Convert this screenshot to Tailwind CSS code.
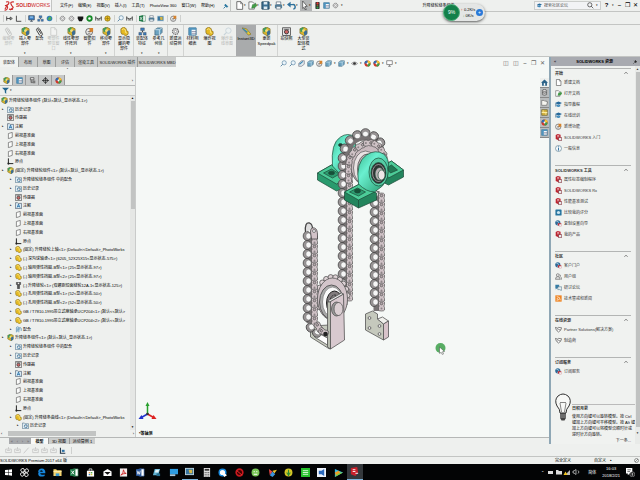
<!DOCTYPE html>
<html lang="zh-CN">
<head>
<meta charset="utf-8">
<title>SOLIDWORKS Premium 2017</title>
<script src="https://cdn.jsdelivr.net/npm/@tailwindcss/browser@4"></script>
</head>
<body class="h-screen overflow-hidden bg-[#eef0ee] font-['Liberation_Sans','Noto_Sans_CJK_SC',sans-serif] text-[4px] leading-[5px] text-black">
<svg class="hidden" aria-hidden="true">
  <symbol id="asm" viewBox="0 0 10 10"><path d="M1 2 5 0l4 2v5L6 10 1 7z" fill="#d9b52c" stroke="#6b5a18" stroke-width=".6"/><path d="M1 2 5 0v4L2 6z" fill="#3c9a63"/><path d="M5 4h4v4L6 10z" fill="#3c6d94"/><circle cx="5" cy="4" r="1.6" fill="#f5e17a"/></symbol>
  <symbol id="part" viewBox="0 0 10 10"><path d="M1 2 4 0l3 2v2l2 1v3L6 10 4 8H2L1 6z" fill="#e5b922" stroke="#7a6216" stroke-width=".7"/><path d="M2 3 4 2l2 1v3L8 7" fill="none" stroke="#fbe88b"/></symbol>
  <symbol id="hist" viewBox="0 0 10 10"><path d="M.6 1.5h3l1 1h4.8v7H.6z" fill="#e4eef4" stroke="#56758a" stroke-width=".9"/><circle cx="5.5" cy="6" r="2.2" fill="#fff" stroke="#2d6c95"/><path d="M5.5 4.8V6h1.3" fill="none" stroke="#234" stroke-width=".7"/></symbol>
  <symbol id="sensor" viewBox="0 0 10 10"><path d="M.6.8h8.8v8.6H.6z" fill="#eee" stroke="#555"/><circle cx="5" cy="5.4" r="2.3" fill="#c66" stroke="#333"/><path d="M2 2.5h6" stroke="#555"/></symbol>
  <symbol id="note" viewBox="0 0 10 10"><path d="M.6 1h3l1 1h4.8v7.4H.6z" fill="#d9eaf5" stroke="#456" stroke-width=".9"/><path d="m3 8 2-5 2 5M3.8 6.3h2.4" fill="none" stroke="#1c6ba5" stroke-width="1.1"/></symbol>
  <symbol id="plane" viewBox="0 0 10 10"><path d="M2 2.2 7.5.6v7L2 9.5z" fill="#fbfcfb" stroke="#555" stroke-width=".9"/></symbol>
  <symbol id="origin" viewBox="0 0 10 10"><path d="M2 .5V8h7" fill="none" stroke="#222" stroke-width="1.4"/><circle cx="2" cy="8" r="1.5" fill="#222"/></symbol>
  <symbol id="mate" viewBox="0 0 10 10"><path d="M2 9V3a1.8 1.8 0 0 1 3.6 0v3M5.5 9V4a1.7 1.7 0 0 1 3.4 0v3M3.8 8V3.2" fill="none" stroke="#4788b5" stroke-width="1"/></symbol>
  <symbol id="bolt" viewBox="0 0 10 10"><path d="M2 .5h6v3L6.5 5v4.5h-3V5L2 3.5z" fill="#555" stroke="#222" stroke-width=".6"/><path d="M4 1h2v2H4z" fill="#eee"/></symbol>
  <symbol id="grid" viewBox="0 0 10 10"><path d="M1 1h8v8H1z" fill="#f4f9fb" stroke="#2f6a8e"/><path d="M1 1h8v2H1zM1 3h3v6H1z" fill="#4e93bd"/><path d="M4 5h5M4 7h5" stroke="#557" stroke-width=".6"/></symbol>
  <symbol id="cfg" viewBox="0 0 10 10"><path d="M2 1h5v3H2zM3 4v4h4M3 6h4" fill="#eee" stroke="#444"/><path d="M6 5h3v4H6z" fill="#777"/></symbol>
  <symbol id="target" viewBox="0 0 10 10"><circle cx="5" cy="5" r="3" fill="none" stroke="#222"/><path d="M5 0v10M0 5h10" stroke="#222"/></symbol>
  <symbol id="ball" viewBox="0 0 10 10"><circle cx="5" cy="5" r="4.4" fill="#d33527"/><path d="M5 5V.6A4.4 4.4 0 0 1 9.4 5z" fill="#f2c72f"/><path d="M5 5h4.4A4.4 4.4 0 0 1 5 9.4z" fill="#3ba04c"/><path d="M5 5H.6A4.4 4.4 0 0 1 5 .6z" fill="#2c6eb5"/><circle cx="5" cy="5" r="1.3" fill="#fff"/></symbol>
  <symbol id="clip" viewBox="0 0 10 10"><path d="m3 2 4 6M2 4l3 5a1.6 1.6 0 0 0 3-2L5 2a1.7 1.7 0 0 0-3 2" fill="none" stroke="#444" stroke-width="1.1"/></symbol>
  <symbol id="doc" viewBox="0 0 10 10"><path d="M2 .7h4.5L8.5 3v6.3H2z" fill="#fff" stroke="#555" stroke-width=".9"/><path d="M6.3.8V3h2" fill="none" stroke="#555" stroke-width=".7"/></symbol>
  <symbol id="open" viewBox="0 0 10 10"><path d="M1 1h4l2 2v6H1z" fill="#fff" stroke="#555" stroke-width=".8"/><path d="m4 8 1-4h3V2l2 3-2 2-3 1z" fill="#43a047" stroke="#23692a" stroke-width=".4"/></symbol>
  <symbol id="save" viewBox="0 0 10 10"><path d="M1 1h8v8H1z" fill="#3b6f91" stroke="#1e445c"/><path d="M3 1h4v3H3zM3 6h4v3H3z" fill="#dce9f1"/></symbol>
  <symbol id="print" viewBox="0 0 10 10"><path d="M2.5 1h5v3h-5z" fill="#fff" stroke="#456" stroke-width=".7"/><path d="M1 4h8v4H1z" fill="#52809c"/><path d="M2.5 6h5v3h-5z" fill="#e9f1f5" stroke="#456" stroke-width=".6"/></symbol>
  <symbol id="undo" viewBox="0 0 10 10"><path d="M2 4h4a2.5 2.5 0 0 1 1 5" fill="none" stroke="#2f719c" stroke-width="1.6"/><path d="M0 4 4 .8v6.4z" fill="#2f719c"/></symbol>
  <symbol id="cur" viewBox="0 0 10 10"><path d="m3 0 5 6H5.5L7 9.5H5.5L4.5 7 3 8.4z" fill="#fff" stroke="#333" stroke-width=".7"/></symbol>
  <symbol id="light" viewBox="0 0 10 10"><rect x="2" y="0" width="6" height="10" rx="1" fill="#333"/><circle cx="5" cy="2" r="1.5" fill="#e33"/><circle cx="5" cy="5" r="1.2" fill="#8a6a22"/><circle cx="5" cy="8" r="1.5" fill="#2b9e47"/></symbol>
  <symbol id="gear" viewBox="0 0 10 10"><circle cx="5" cy="5" r="3.3" fill="#ddd" stroke="#777" stroke-width="1.4" stroke-dasharray="1.5 .6"/><circle cx="5" cy="5" r="1.3" fill="#fff" stroke="#777" stroke-width=".6"/></symbol>
  <symbol id="house" viewBox="0 0 10 10"><path d="M0 5.5 5 .7l5 4.8H8.5v4h-7v-4z" fill="#2c6388"/><path d="M4 6h2v3.5H4z" fill="#fff"/></symbol>
  <symbol id="folder" viewBox="0 0 10 10"><path d="M1 2h3l1 1h3v1h1.5L8 9H1z" fill="#f5f5f0" stroke="#666" stroke-width=".9"/></symbol>
  <symbol id="box" viewBox="0 0 10 10"><path d="M1 1h8v8H1z" fill="#d8b542" stroke="#6e642e"/><path d="M1 5h8M3 2v2M7 6v2" stroke="#fff3ad" stroke-width="1.3"/></symbol>
  <symbol id="cyl" viewBox="0 0 10 10"><path d="M2 2v6q3 2 6 0V2" fill="#ccc" stroke="#555"/><ellipse cx="5" cy="2" rx="3" ry="1.3" fill="#eee" stroke="#555"/><path d="M2 5q3 2 6 0" fill="none" stroke="#555"/></symbol>
  <symbol id="cap" viewBox="0 0 10 10"><path d="M0 3 5 .8 10 3 5 5.5z" fill="#26699b"/><path d="M2 4.5v3q3 2 5.5 0v-3L5 6z" fill="#3c88bb"/><path d="M1 3.5V8" stroke="#1b4a6d" stroke-width=".8"/></symbol>
  <symbol id="new" viewBox="0 0 10 10"><circle cx="4.6" cy="5.4" r="3.8" fill="#eee" stroke="#555" stroke-width=".9"/><path d="M5 1h4v4L5 6z" fill="#d5822c"/><path d="M3 5h3M3 7h3" stroke="#555" stroke-width=".7"/></symbol>
  <symbol id="sw" viewBox="0 0 10 10"><path d="M1 1.5 4 0l4 1v6L5 9 1 7z" fill="#bd2531"/><path d="M3 2.3h3M3 4h3" stroke="#fff" stroke-width=".8"/><path d="M5 5h4.5v4.5H5z" fill="#e9e9e9" stroke="#7d2330" stroke-width=".9"/></symbol>
  <symbol id="info" viewBox="0 0 10 10"><circle cx="5" cy="5" r="4.3" fill="#f4f8fa" stroke="#5a7d91" stroke-width=".9"/><path d="M5 4v4M5 2v1.2" stroke="#23689a" stroke-width="1.3"/></symbol>
  <symbol id="score" viewBox="0 0 10 10"><rect x=".6" y=".6" width="8.8" height="8.8" rx="1" fill="#26749f"/><circle cx="5" cy="5" r="2.3" fill="#cbe5f0"/></symbol>
  <symbol id="globe" viewBox="0 0 10 10"><circle cx="4" cy="4" r="3.7" fill="#2e6a97"/><path d="M2 2q3-1 3 2T3 7" fill="none" stroke="#bfe0ef"/><path d="M4 4.5h5V9H6L4 7z" fill="#c22c36"/><path d="M6 6h3v3H6z" fill="#eee"/></symbol>
  <symbol id="users" viewBox="0 0 10 10"><circle cx="4" cy="3" r="2" fill="#eee" stroke="#555" stroke-width=".8"/><path d="M.7 9q0-4 3.3-4t3.3 4z" fill="#ddd" stroke="#555" stroke-width=".8"/><path d="M6.5 2q2 .5 1 3 2 1 1.8 4H8" fill="none" stroke="#555" stroke-width=".8"/></symbol>
  <symbol id="chat" viewBox="0 0 10 10"><path d="M.5 1H6v5H3L1 8V6H.5z" fill="#347ca5"/><path d="M4 4h5.5v4H9v1.5L7 8H4z" fill="#e7eff3" stroke="#3a6279" stroke-width=".7"/></symbol>
  <symbol id="rss" viewBox="0 0 10 10"><path d="M.5.5h9v9h-9z" fill="#ef8320"/><path d="M2.5 2.3q5 0 5 5.2M2.5 5q2.5 0 2.5 2.5" fill="none" stroke="#fff"/><circle cx="3" cy="7.3" r=".8" fill="#fff"/></symbol>
  <symbol id="hands" viewBox="0 0 10 10"><path d="m.6 2 3 1L5 2l4.400.5L8 6 5 8.600 2 6z" fill="#fff" stroke="#444" stroke-width=".9"/><path d="m3.500 3 2 2L8 6M3 6l2-1" fill="none" stroke="#444" stroke-width=".8"/></symbol>
  <symbol id="lens" viewBox="0 0 10 10"><circle cx="6" cy="4" r="3" fill="#eaf4fa" stroke="#5581a0" stroke-width=".9"/><path d="M4 6 1 9" stroke="#5581a0" stroke-width="1.3"/></symbol>
  <symbol id="sect" viewBox="0 0 10 10"><path d="M1 5 5 1h4v5L5 9H1z" fill="#dfe8ec" stroke="#667" stroke-width=".8"/><path d="M2 6 7 2" stroke="#3b87b4" stroke-width="1.6"/></symbol>
  <symbol id="inst" viewBox="0 0 10 10"><path d="m0 1 5 1 5 6-3 1z" fill="#e8c832" stroke="#75661c" stroke-width=".6"/><path d="m1 2 5 4" stroke="#3b87b4" stroke-width="1.6"/></symbol>
  <symbol id="cube" viewBox="0 0 10 10"><path d="M1 3 4 1h5v5L6 9H1z" fill="#6ca3c1" stroke="#355b72" stroke-width=".7"/><path d="M1 3h5v6M6 3l3-2" fill="none" stroke="#e0f0f7" stroke-width=".8"/></symbol>
  <symbol id="eye" viewBox="0 0 10 10"><path d="M.5 5Q5 .5 9.5 5 5 9.5.5 5z" fill="#ddd" stroke="#666" stroke-width=".7"/><circle cx="5" cy="5" r="1.9" fill="#333"/></symbol>
  <symbol id="mon" viewBox="0 0 10 10"><path d="M1 1h8v5.5H1z" fill="#fff" stroke="#666"/><path d="M5 7v2M3 9h4" stroke="#666"/></symbol>
  <symbol id="bluem" viewBox="0 0 10 10"><path d="M1 1h8v6H1z" fill="#4285cc" stroke="#345"/><path d="M3 9h4M5 7v2" stroke="#345"/><path d="M3 3h4" stroke="#dff"/></symbol>
  <symbol id="bluet" viewBox="0 0 10 10"><path d="M3 1h4v3H3zM1 6h3v3H1zM6 6h3v3H6z" fill="#3c7cbd" stroke="#345" stroke-width=".5"/><path d="M5 4v2" stroke="#333"/></symbol>
  <symbol id="greenb" viewBox="0 0 10 10"><circle cx="5" cy="5" r="4" fill="#347db8"/><path d="m2 6 3-4 3 2-2 4z" fill="#4eae59"/></symbol>
  <symbol id="ring" viewBox="0 0 10 10"><circle cx="5" cy="5" r="3.2" fill="#fff" stroke="#168a28" stroke-width="2.6"/></symbol>
  <symbol id="blk" viewBox="0 0 10 10"><path d="M1 2h8v3L7 9H3L1 5z" fill="#161616"/></symbol>
  <symbol id="hh" viewBox="0 0 10 10"><path d="M1 2v6M9 2v6M1 4q4 3 8 0M3 7h4" fill="none" stroke="#444" stroke-width="1.3"/></symbol>
  <symbol id="yel" viewBox="0 0 10 10"><circle cx="5" cy="5" r="3.8" fill="#e6bc21" stroke="#8a6e12"/><path d="M5 2v6M2 5h6" stroke="#8a6e12" stroke-width=".8"/></symbol>
  <symbol id="xls" viewBox="0 0 10 10"><path d="M4 1h5v8H4z" fill="#fff" stroke="#247245" stroke-width=".7"/><path d="M0 1.5 6 .5v9l-6-1z" fill="#1f7a47"/><path d="m1.5 3 3 4M4.5 3l-3 4" stroke="#fff"/></symbol>
  <symbol id="word" viewBox="0 0 10 10"><path d="M4 1h5v8H4z" fill="#fff" stroke="#2b579a" stroke-width=".7"/><path d="M0 1.5 6 .5v9l-6-1z" fill="#2b579a"/><path d="m1.2 3 1 4L3 4l1 3 .8-4" fill="none" stroke="#fff" stroke-width=".8"/></symbol>
  <symbol id="win" viewBox="0 0 10 10"><path d="M0 1.5 4.500 1v3.700H0zM5.200.9 10 .2v4.500H5.200zM0 5.400h4.500V9L0 8.500zM5.200 5.400H10v4.400L5.200 9z" fill="#fff"/></symbol>
  <symbol id="fan" viewBox="0 0 10 10"><path d="M4.500 4.500C0 5 0 1 3 .5c2 0 2 2 1.500 4M5.500 4.500C5 0 9 0 9.500 3c0 2-2 2-4 1.500M5.500 5.500C10 5 10 9 7 9.500c-2 0-2-2-1.500-4M4.500 5.500C5 10 1 10 .5 7c0-2 2-2 4-1.500" fill="none" stroke="#fff" stroke-width="1.100"/></symbol>
  <symbol id="edge" viewBox="0 0 10 10"><path d="M1 5Q1.500.5 5.500.5 9.500.800 9.300 5.800H3.500Q4 8.500 8.500 7.200V9Q1.500 11 1.300 6 1.800 3.500 4 2.800 3.500 3.500 3.500 4.200h3Q6.400 2.500 4.800 2.400 2.500 2.500 1 5" fill="#1686dc"/></symbol>
  <symbol id="fold" viewBox="0 0 10 10"><path d="M.5 1.500h3l1 1h5V9h-9z" fill="#f5d36d"/><path d="M3 6h4v3H3z" fill="#3a9bd6"/><path d="M.5 4h9" stroke="#fff0b5"/></symbol>
  <symbol id="store" viewBox="0 0 10 10"><path d="M1 3h8v6.500H1z" fill="#fff"/><path d="M3.500 3V1h3v2" fill="none" stroke="#fff" stroke-width=".8"/><path d="M3 4.500h1.700V6H3z" fill="#e94"/><path d="M5.300 4.500H7V6H5.300z" fill="#4a4"/><path d="M3 6.600h1.700V8H3z" fill="#38c"/><path d="M5.300 6.600H7V8H5.300z" fill="#dc3"/></symbol>
  <symbol id="mail" viewBox="0 0 10 10"><path d="M.5 4 5 1l4.500 3v5h-9z" fill="#fff"/><path d="m1.500 4.500 3.500 3 3.500-3z" fill="#111"/></symbol>
  <symbol id="pdf" viewBox="0 0 10 10"><path d="M1 .5h8v9H1z" fill="#f5eeee"/><path d="M2 8q3-2 3-6 .5 4 3 4-4 0-6 2" fill="none" stroke="#cf2a2a" stroke-width="1"/></symbol>
  <symbol id="paper" viewBox="0 0 10 10"><path d="M3 1h6L7 8H1z" fill="#62b3d3"/><path d="M4 2h4L7 5H3.200z" fill="#e5f4f7"/><path d="M5 6h4v3H5z" fill="#286f8f"/></symbol>
  <symbol id="pc" viewBox="0 0 10 10"><path d="M1 1h9v6H1z" fill="#2f9de2"/><path d="M1 7h6v2H1z" fill="#aac8dc"/></symbol>
  <symbol id="img" viewBox="0 0 10 10"><path d="M0 1h10v8H0z" fill="#b8cfda"/><path d="M1 2h8v6H1z" fill="#3975a0"/><path d="M4 3h4v4H5z" fill="#d4b647"/></symbol>
  <symbol id="calc" viewBox="0 0 10 10"><path d="M2 0h7v10H2z" fill="#ddd"/><path d="M3 1h5v2H3z" fill="#333"/><path d="M3 5h5M3 7h5M3 9h5" stroke="#333" stroke-dasharray="1 1"/></symbol>
  <symbol id="qb" viewBox="0 0 10 10"><circle cx="5" cy="5" r="3.700" fill="#fff" stroke="#1b8ce0" stroke-width="1.600"/><path d="M5 7q2-2 5 1L7 10z" fill="#fff"/></symbol>
  <symbol id="red" viewBox="0 0 10 10"><circle cx="5" cy="5" r="3.700" fill="#400" stroke="#c9181e" stroke-width="1.800"/><path d="m2 3 6 5" stroke="#e33"/></symbol>
  <symbol id="frog" viewBox="0 0 10 10"><circle cx="5" cy="5" r="4.400" fill="#78c656"/><path d="M3 4h1M6 4h1M3 7h4" stroke="#fff" stroke-width="1.200"/></symbol>
  <symbol id="multi" viewBox="0 0 10 10"><path d="m1 1 4 3-3 4z" fill="#e64747"/><path d="m5 3 5-1-3 4z" fill="#f0c52d"/><path d="m2 8 3-4 3 3-3 3z" fill="#3c94dd"/></symbol>
  <symbol id="ybird" viewBox="0 0 10 10"><circle cx="5" cy="5" r="4.400" fill="#d4c526"/><path d="M5 2v7M3 5l2 3 2-3" stroke="#2e8d35" stroke-width="1.200" fill="none"/></symbol>
  <symbol id="gs" viewBox="0 0 10 10"><path d="M0 0h10v10H0z" fill="#26c22c"/><path d="M2 3h6M2 5h6M2 7h6" stroke="#dfffe0"/></symbol>
  <symbol id="bw" viewBox="0 0 10 10"><path d="M0 0h10v10H0z" fill="#eef3fb"/><path d="M2 3h3l3-2v8L5 7H2z" fill="#2a69bd"/></symbol>
  <symbol id="play" viewBox="0 0 10 10"><path d="m1 1 9 4-9 5z" fill="#34b9e4"/><path d="m1 10 9-5H4z" fill="#82cf39"/><path d="m1 5 4-2 2 2-5 3z" fill="#ef9c25"/></symbol>
  <symbol id="swr" viewBox="0 0 10 10"><path d="M1 1 8 0l1 6-3 4-5-2z" fill="#c9202b"/><path d="M3 3h3M3 5h3M6 7h3" stroke="#fff"/></symbol>
  <symbol id="dim" viewBox="0 0 10 10"><path d="M1 3h8v5H1zM5 0v3M3 5h4" fill="none" stroke="#bbb" stroke-width=".9"/></symbol>
  <symbol id="graph" viewBox="0 0 10 10"><path d="M2 1v8h7" fill="none" stroke="#234" stroke-width="1.500"/><path d="M4 4h4v3H4z" fill="#2c71a5"/></symbol>
  <symbol id="lv" viewBox="0 0 10 10"><path d="M1 2v6M1 5h5M6 3l3 2-3 2z" fill="none" stroke="#333" stroke-width="1.200"/></symbol>
  <symbol id="ang" viewBox="0 0 10 10"><path d="M2 1v8h7" fill="none" stroke="#333" stroke-width="1.200"/></symbol>
  <symbol id="bar" viewBox="0 0 10 10"><path d="M5 0v10" stroke="#b6b8b6" stroke-width=".8"/></symbol>
</svg>

<div class="flex h-full flex-col">
  <header class="flex h-3 shrink-0 items-center border-b border-[#c3c5c3]">
    <div class="flex h-full w-[52px] items-center gap-px border-r border-[#c3c5c3] bg-[#f8f8f7] pl-[4px] text-[#cc2c2c]">
      <svg class="h-[10px] w-[11px]" viewBox="0 0 11 10"><path d="M2 1q4-1 2.500 2-2 2-3.500 1.500 3 0 2.500 2.500T.5 9M3.500 4 1 8M10 1Q6 .5 7 3t2 3-3 3M5 8q2 1 4 0" fill="none" stroke="#cc2c2c" stroke-width="1.100"/></svg>
      <span class="text-[5px]"><b>SOLID</b>WORKS</span>
    </div>
    <nav class="flex items-center gap-[5px] pl-[8px]">
      <button>文件(F)</button><button>编辑(E)</button><button>视图(V)</button><button>插入(I)</button><button>工具(T)</button><button>PhotoView 360</button><button>窗口(W)</button><button>帮助(H)</button>
      <button aria-label="固定菜单" class="pl-[3px]"><svg class="size-[6px]" viewBox="0 0 10 10"><path d="m4 2 4 4-2 1-3-3zM4 6 1 9" fill="#28769e" stroke="#28769e" stroke-width="1.500"/></svg></button>
    </nav>
    <div id="quick" class="ml-px flex h-full items-center border-l border-[#c3c5c3] pl-[4px]"></div>
    <h1 class="ml-auto">升降链轮链条组件*</h1>
    <div class="ml-[78px] flex h-[9px] w-[67px] items-center gap-[2px] border border-[#cccecc] bg-[#f2f3f5] px-[2px]">
      <svg class="size-[5px]" viewBox="0 0 10 10"><use href="#cap"/></svg>
      <input aria-label="搜索社区论坛" placeholder="搜索社区论坛" class="w-0 flex-1 outline-none placeholder:text-[#555]">
      <svg class="size-[7px]" viewBox="0 0 10 10"><circle cx="4" cy="4" r="3" fill="none" stroke="#333"/><path d="m6 6 3 3" stroke="#333"/></svg><span class="text-[3px]">▾</span>
    </div>
    <div class="flex w-[39px] items-center justify-around pl-[2px] text-[6px]"><button aria-label="帮助"><b>?</b></button><span class="text-[3px]">▾</span><button aria-label="最小化"><b>–</b></button><button aria-label="还原">❐</button><button aria-label="关闭">✕</button></div>
  </header>

  <div id="bar2" class="flex h-[13px] shrink-0 items-center border-b border-[#c3c5c3] pl-px"></div>
  <div id="ribbon" class="flex h-8 shrink-0 border-b border-[#c3c5c3]"></div>

  <main class="flex min-h-0 flex-1">
    <div class="flex min-w-0 flex-1 flex-col bg-[#f5f8f6]">
      <div class="flex h-[10px] shrink-0 items-center">
        <div role="tablist" class="flex h-full bg-[#cacccb] text-[#222]">
          <button role="tab" aria-selected="true" class="w-[18px] bg-[#f1f3f1]">装配体</button><button role="tab" class="w-[19px] border-l border-[#9b9d9c]">布局</button><button role="tab" class="w-[18px] border-l border-[#9b9d9c]">草图</button><button role="tab" class="w-[19px] border-l border-[#9b9d9c]">评估</button><button role="tab" class="w-[23px] border-l border-[#9b9d9c]">渲染工具</button><button role="tab" class="w-[40px] border-l border-[#9b9d9c] whitespace-nowrap">SOLIDWORKS 插件</button><button role="tab" class="w-[39px] border-l border-[#9b9d9c] whitespace-nowrap">SOLIDWORKS MBD</button>
        </div>
        <div id="hud" class="ml-auto flex items-center pt-[2px]"></div>
        <div class="mr-[2px] ml-auto flex w-[46px] items-center justify-around pt-[2px] text-[6px] text-[#666]"><button aria-label="左窗格">◫</button><button aria-label="右窗格">◫</button><button aria-label="最小化窗口"><b>–</b></button><button aria-label="还原窗口">❐</button><button aria-label="关闭窗口">✕</button></div>
      </div>

      <div class="flex min-h-0 flex-1">
        <aside class="flex w-[136px] shrink-0 flex-col border-r border-[#c9cbca] bg-[#eef0ee]">
          <div class="h-[8px] text-center text-[4px] leading-[4px] text-[#666]">•</div>
          <div id="ptabs" class="flex h-[11px] items-stretch border-b border-[#b5b7b6]"></div>
          <label class="flex h-[10px] items-center gap-px border-b border-[#c9cbca] pl-[2px]">
            <svg class="size-[7px]" viewBox="0 0 10 10"><path d="M0 1h10L6 5v5L4 8V5z" fill="#22668e"/></svg><span class="text-[3px]">▾</span>
            <input aria-label="筛选" class="w-0 flex-1 outline-none">
          </label>
          <div class="flex min-h-0 flex-1">
            <ul id="tree" class="flex min-w-0 flex-1 flex-col overflow-hidden" role="tree"></ul>
            <div class="flex w-[5px] flex-col items-center bg-[#e5e7e5] text-[3px]"><span>▲</span><i class="w-[4px] flex-[2] bg-[#c2c4c3]"></i><i class="flex-[4]"></i><span>▼</span></div>
          </div>
          <div class="flex h-[7px] items-center justify-between px-px"><span>‹</span><i class="h-[5px] w-[88px] bg-[#c2c4c3]"></i><i class="w-[26px]"></i><span>›</span></div>
        </aside>
        <div class="relative min-w-0 flex-1">
          <svg id="view" class="h-full w-full" viewBox="137 67 412 370" role="img" aria-label="升降链轮链条组件模型"></svg>
          <b class="absolute bottom-px left-[3px]">*等轴测</b>
        </div>
      </div>

      <div class="flex h-[7px] shrink-0 items-center border-t border-[#b5b7b6] bg-[#eef0ee]">
        <div class="ml-[9px] flex h-full w-[22px] items-center justify-around bg-[#a7a9ac] text-[#666]"><span>«</span><span>‹</span><span>›</span><span>»</span></div>
        <button class="h-full w-[17px] bg-[#f8f9f8] font-bold">模型</button><button class="h-full w-[21px] border-l border-[#999] bg-[#cacccb]">3D 视图</button><button class="h-full w-[26px] border-l border-[#999] bg-[#cacccb]">运动算例 1</button>
      </div>
    </div>

    <div id="dock" class="relative w-0"></div>
    <aside class="flex w-[91px] shrink-0 flex-col border-l-2 border-[#8fa7b5] bg-[#f0f2f0] text-[#333]">
      <div class="flex h-[9px] shrink-0 items-center justify-between bg-[#a8aab0] px-[3px] text-black"><span>«</span><b>SOLIDWORKS 资源</b><svg class="size-[4px]" viewBox="0 0 10 10"><path d="m3 2 5 5M6 1l3 3-4 2zM4 6 1 9" fill="#222" stroke="#222" stroke-width="1.500"/></svg></div>
      <div class="flex min-h-0 flex-1">
        <div class="min-w-0 flex-1 pt-[2px] pl-[4px]">
          <div id="sections" class="mr-[4px]"></div>
          <div class="mt-[5px] flex gap-px">
            <svg class="h-[30px] w-[16px] shrink-0" viewBox="0 0 16 30"><path d="M5 20Q5 16 2 13-1 7 3 3q5-4 10 0 4 4 1 10-3 3-3 7z" fill="#f7f8f6" stroke="#333" stroke-width="1"/><path d="M6.500 19 5 10q1-2 2 0 1-2 2 0 1-2 2 0L9.500 19" fill="none" stroke="#666" stroke-width=".8"/><path d="M5 20h6v5l-1.500 2.500h-3L5 25z" fill="#444"/><path d="M5 22h6M5 24h6" stroke="#bbb" stroke-width=".7"/></svg>
            <div class="min-w-0 flex-1 pt-[11px] leading-[6px]"><b class="block border-t border-[#bbb] pt-px">日积月累</b><p class="mt-[2px] text-black">使用方向键可以旋转模型。按 Ctrl 键加上方向键可平移模型。按 Alt 键加上方向键可以将模型沿顺时针或逆时针方向旋转。</p><p class="pr-[4px] text-right"><a href="#next" class="text-[#222]">下一条...</a></p></div>
          </div>
        </div>
        <div class="flex w-[5px] flex-col items-center justify-between bg-[#e8eae8] pt-px text-[3px]"><span>▲</span><i class="w-[4px] flex-1 bg-[#c0c2c1]"></i><span class="pt-[4px] pb-[8px]">▼</span></div>
      </div>
    </aside>
  </main>

  <div id="dims" class="flex h-[13px] shrink-0 items-center gap-[2px] border-b border-[#c3c5c3] pl-[5px]"></div>
  <footer class="flex h-[7px] shrink-0 items-center"><span>SOLIDWORKS Premium 2017 x64 版</span><span class="mr-[23px] ml-auto">完全定义</span><span>自定义</span><span class="mr-[22px] ml-[4px] text-[3px]">▴</span><svg class="mr-px size-[5px]" viewBox="0 0 10 10"><circle cx="5" cy="5" r="4" fill="none" stroke="#444"/><path d="m2 8 6-6" stroke="#444"/></svg></footer>
  <div class="flex h-4 shrink-0 items-center bg-[#030405] text-white">
    <div id="tasks" class="flex h-full w-[363px]"></div>
    <div class="ml-auto flex items-center gap-[3px]">
      <span>⌃</span>
      <svg class="h-[6px] w-[38px]" viewBox="0 0 38 6"><path d="M1 2h5v3H1zM9 1h2l1 1h3v3.500H9z" fill="#ddd"/><path d="m18 6 5-5v5z" fill="#bbb"/><path d="m16.500 6 2-3.500 2 3.500z" fill="#f2c522"/><path d="M26 2h1l2-1.500v5L27 4h-1zM31 1.500q2 1.500 0 3" fill="none" stroke="#ddd" stroke-width=".7"/></svg>
      <span>简体</span>
      <time class="mx-[3px] text-center leading-[7px]">16:03<br>2018/2/21</time>
      <svg class="mr-[5px] h-[9px] w-[9px]" viewBox="0 0 10 10"><path d="M0 0h7v6H4L2 8V6H0z" fill="#fff"/><path d="M1.500 2h4M1.500 4h3" stroke="#222" stroke-width=".7"/><circle cx="7" cy="7" r="2.800" fill="#222" stroke="#aaa" stroke-width=".6"/><path d="M7 5.500v3" stroke="#fff" stroke-width=".8"/></svg>
    </div>
  </div>
</div>

<div class="absolute top-[4px] right-[155px] flex h-[17px] w-[42px] items-center rounded-full bg-[#e4e6e5] shadow-sm shadow-black/50">
  <div class="flex size-[17px] items-center justify-center rounded-full border border-[#4fae7b] bg-[#13804a] text-[5px] text-white">9%</div>
  <div class="flex flex-1 flex-col text-center leading-[6px]"><span><span class="text-[#d22]">↑</span> 0.2K/s</span><span><span class="text-[#293]">↓</span> 0K/s</span></div>
  <div class="mr-[2px] flex size-[7px] items-center justify-center rounded-full bg-[#2879d8] text-[5px] text-white">+</div>
</div>

<script>
const $ = id => document.getElementById(id);
const mid = n => `<svg class="size-[7px] shrink-0" viewBox="0 0 10 10"><use href="#${n}"/></svg>`;
const big = n => `<svg class="size-[9px] shrink-0" viewBox="0 0 10 10"><use href="#${n}"/></svg>`;

$('quick').innerHTML = ['doc','open','save','print','undo'].map(n =>
  `<button aria-label="${n}" class="flex w-[13px] items-center">${big(n)}<span class="text-[3px]">▾</span></button>`).join('') +
  `<button aria-label="选择" class="flex h-full w-[12px] items-center bg-[#b4b6b7]">${big('cur')}<span class="text-[3px]">▾</span></button>` +
  ['light','grid','gear'].map(n => `<button aria-label="${n}" class="ml-[2px]">${mid(n)}</button>`).join('') + '<span class="ml-[2px] text-[3px]">▾</span>';

$('bar2').innerHTML = ['bar','lv','ang','bar','bluem','bluet','greenb','bar','gear','gear','blk','ring','hh','yel','bar','lens','hh','bar','xls','print','img','bar','new','bar']
  .map(n => n === 'bar' ? `<span class="flex w-[4px] justify-center">${mid(n)}</span>` : `<button aria-label="${n}" class="flex w-[9px] justify-center">${mid(n)}</button>`).join('');

const R = [
  ['clip','编辑零<br>部件','w-[17px] opacity-25'],['asm','插入零<br>部件','w-[16px]',1],['clip','配合','w-[13px]'],['doc','零部件<br>预览窗<br>口','w-[15px] opacity-25'],
  ['asm','线性零部<br>件阵列','w-[20px]',1],['new','智能扣<br>件','w-[17px]'],['asm','移动零<br>部件','w-[17px] border-r border-[#d2d4d2]',1],
  ['part','显示隐<br>藏的零<br>部件','w-[19px] border-r border-[#d2d4d2]'],['bluet','装配体<br>特征','w-[16px]',1],['cube','参考几<br>何体','w-[18px] border-r border-[#d2d4d2]',1],
  ['gear','新建运<br>动算例','w-[16px] border-r border-[#d2d4d2]'],['grid','材料明<br>细表','w-[17px]'],['part','爆炸视<br>图','w-[17px]'],['lens','爆炸直<br>线草图','w-[18px] opacity-25'],
  ['inst','Instant3D','w-[20px] bg-[#a9abac]'],['asm','更新<br>Speedpak','w-[22px] border-r border-[#d2d4d2]'],['sensor','拍快照','w-[17px]'],['asm','大型装<br>配体模<br>式','w-[17px]']];
$('ribbon').innerHTML = R.map(([i,t,c,d]) =>
  `<button class="flex shrink-0 flex-col items-center pt-[2px] ${c}">${big(i)}<span>${t}</span>${d ? '<span class="mt-auto text-[3px]">▾</span>' : ''}</button>`).join('');

$('hud').innerHTML = ['lens','lens','sect','cube','new','cube','-','cube','-','eye','-','ball','ball','-','mon','-']
  .map(n => n === '-' ? '<span class="w-[4px] text-center text-[3px]">▾</span>' : `<button aria-label="${n}" class="flex w-[9px] justify-center">${mid(n)}</button>`).join('');

$('ptabs').innerHTML = ['asm','grid','cfg','target','ball'].map((n,i) =>
  `<button aria-label="${n}" class="flex w-[13px] items-center justify-center border-r border-[#999] ${i ? 'bg-[#c6c8c8]' : ''}">${mid(n)}</button>`).join('') + '<span class="mr-[2px] ml-auto self-center">›</span>';

const T = [
  [0,'asm','升降链轮链条组件  (默认<默认_显示状态-1>)'],[1,'hist','历史记录',1],[1,'sensor','传感器'],[1,'note','注解',1],[1,'plane','前视基准面'],[1,'plane','上视基准面'],[1,'plane','右视基准面'],[1,'origin','原点'],
  [1,'asm','(固定) 升降链轮组件<1> (默认<默认_显示状态-1>)',1],[2,'hist','升降链轮链条组件 中的配合',1],[2,'hist','历史记录',1],[2,'sensor','传感器'],[2,'note','注解',1],[2,'plane','前视基准面'],[2,'plane','上视基准面'],[2,'plane','右视基准面'],[2,'origin','原点'],
  [2,'part','(固定) 升降链轮上轴<1> (Default<<Default>_PhotoWorks',1],[2,'part','(-) 深沟球轴承<1> (6205_52X25X15<显示状态-575>)',1],[2,'part','(-) 轴用弹性挡圈-B型<1> (25<显示状态-97>)',1],[2,'part','(-) 轴用弹性挡圈-B型<2> (25<显示状态-97>)',1],
  [2,'bolt','(-) 升降链轮<1> (双螺距短面链轮12A-1<显示状态-125>)',1],[2,'part','(-) 孔用弹性挡圈-B型<1> (52<显示状态-50>)',1],[2,'part','(-) 孔用弹性挡圈-B型<2> (52<显示状态-50>)',1],
  [2,'part','GB / T7810-1995带立式座轴承UCP204<1> (默认<<默认>',1],[2,'part','GB / T7810-1995带立式座轴承UCP204<2> (默认<<默认>',1],[2,'mate','配合',1],
  [1,'asm','升降链条组件<1> (默认<默认_显示状态-1>)',1],[2,'hist','升降链轮链条组件 中的配合',1],[2,'hist','历史记录',1],[2,'sensor','传感器'],[2,'note','注解',1],[2,'plane','前视基准面'],[2,'plane','上视基准面'],[2,'plane','右视基准面'],[2,'origin','原点'],
  [2,'part','(固定) 升降链条曲线<1> (Default<<Default>_PhotoWorks',1],[3,'hist','历史记录',1]];
const pad = ['pl-px','pl-[2px]','pl-[10px]','pl-[17px]'];
$('tree').innerHTML = T.map(([l,i,t,e]) =>
  `<li role="treeitem" class="flex min-h-0 flex-1 items-center gap-px whitespace-nowrap ${pad[l]}">${l ? `<span class="w-[4px] shrink-0 text-[3px]">${e ? '▸' : ''}</span>` : ''}${mid(i)}<span>${t.replace(/</g,'&lt;')}</span></li>`).join('');

const S = [
  ['开始',[['doc','新建文档'],['open','打开文档'],['cap','指导教程'],['cap','在线培训'],['new','新增功能'],['sw','SOLIDWORKS 入门'],['info','一般信息']]],
  ['SOLIDWORKS 工具',[['sw','属性标签编制程序'],['sw','SOLIDWORKS Rx'],['sw','性能基准测试'],['score','比较我的评分'],['globe','复制设置向导'],['sw','我的产品']]],
  ['社区',[['globe','客户门户'],['users','用户组'],['chat','研讨论坛'],['rss','技术警戒和新闻']]],
  ['在线资源',[['hands','Partner Solutions(解决方案)'],['hands','制造商']]],
  ['订阅服务',[['globe','订阅服务']]]];
$('sections').innerHTML = S.map(([h,a]) =>
  `<section class="border-t border-[#b3b5b4] pb-[11px]"><h2 class="flex h-[8px] items-center justify-between pr-[3px] font-bold"><span>${h}</span><svg class="size-[4px]" viewBox="0 0 10 10"><path d="m1 7 4-4 4 4" fill="none" stroke="#333" stroke-width="1.500"/></svg></h2>${a.map(([i,t]) =>
  `<a href="#${i}" class="flex h-[11px] items-center gap-[2px] whitespace-nowrap">${mid(i)}<span>${t}</span></a>`).join('')}</section>`).join('');

$('dock').innerHTML = `<div class="absolute top-[21px] right-0 w-[9px] bg-[#b9bcbd]">${['house','cyl','folder','box','ball','grid'].map((n,i) =>
  `<button aria-label="${n}" class="flex h-[10px] w-full items-center justify-center border-b border-[#888] ${i ? '' : 'bg-[#eef0ee]'}">${mid(n)}</button>`).join('')}</div>`;

$('dims').innerHTML = ['dim','dim','line','dim','dim','dim','graph','bar'].map(n =>
  n === 'line' ? '<svg class="size-[7px]" viewBox="0 0 10 10"><path d="M1 9 8 1" stroke="#bbb"/></svg>' : mid(n)).join('');

$('tasks').innerHTML = ['win','fan','edge','fold','xls','store','mail','pdf','word','paper','pc','img','calc','qb','red','frog','multi','ybird','gs','bw','play','swr'].map((n,i) =>
  `<button aria-label="${n}" class="flex flex-1 items-center justify-center ${i === 21 ? 'border-b border-[#7bb4dc] bg-[#34383c]' : i === 11 ? 'border-b border-[#7bb4dc]' : ''}">${i ? big(n) : mid(n)}</button>`).join('');

// Roller chain: rollers sit on the back line, side plates on the front line.
const link = (x,y,a=0) => `<g transform="translate(${x} ${y}) rotate(${a})"><ellipse cx="-1.500" cy="0" rx="3.800" ry="4.500" fill="#9a9596" stroke="#444" stroke-width=".8"/><ellipse cx="0" cy="0" rx="2.700" ry="3" fill="#f6f6f6" stroke="#666" stroke-width=".5"/></g>`;
const plate = (x,y,a=0) => `<g transform="translate(${x} ${y}) rotate(${a})"><path d="M-3-3.800Q-2.500-5 0-5T3-3.800V-1.500Q1.800 0 3 1.500V4Q2.500 5 0 5T-3 4V1.500Q-1.800 0-3-1.500z" fill="#cfc2c6" stroke="#555" stroke-width=".7"/><circle cy="-2.500" r="1.300" fill="#b5a9ad" stroke="#444" stroke-width=".6"/><circle cy="2.600" r="1" fill="#8d8487"/></g>`;
const strand = (x,y0,y1) => { let s=`<path d="M${x-2} ${y0-3}h6V${y1+3}h-6z" fill="#777273"/>`; for (let y=y0;y<y1;y+=9) s+=link(x,y); for (let y=y0+4;y<y1+3;y+=9) s+=plate(x+6,y); return s; };
const arc = (pts,f) => pts.map(p => f(...p)).join('');
const teeth = Array.from({length:12},(_,k)=>{const a=(k*18-205)*Math.PI/180;return `<circle cx="${(333+15*Math.cos(a)).toFixed(1)}" cy="${(298+21*Math.sin(a)).toFixed(1)}" r="2.600" fill="#ddd2d5" stroke="#444" stroke-width=".7"/>`}).join('');
$('view').innerHTML = `
<defs><linearGradient id="g1" x1="0" y1="0" x2="1" y2="1"><stop offset="0" stop-color="#39b98f"/><stop offset=".35" stop-color="#6af0d0"/><stop offset="1" stop-color="#239466"/></linearGradient></defs>
<g stroke="#1d4a38" stroke-width=".7" stroke-linejoin="round">
 <path d="M318 173 332 165 352 177v8l-15 6-19-11z" fill="#299b6e"/><path d="m318 173 14-8 20 12-15 7z" fill="#49c996"/><path d="m324 173 8-4 8 5-7 4z" fill="#2d9d71"/><ellipse cx="332" cy="173" rx="3" ry="1.800" fill="#155239"/>
 <path d="M333 166q-2-23 8-29 7-5 15 0v35l-12 6z" fill="url(#g1)"/><ellipse cx="341" cy="145" rx="2" ry="1.500" fill="#26332e"/>
</g>
${strand(344,166,302)}${strand(376,194,308)}
<path d="M346 165q0-26 17-28 14 0 18 12" fill="none" stroke="#777273" stroke-width="7"/>
${arc([[344,158,8],[346,149,25],[351,141,45],[358,136,70],[366,134,90],[374,137,120],[380,143,150]],link)}
<ellipse cx="368" cy="164" rx="17" ry="22" fill="#c9babf" stroke="#444" stroke-width=".8"/>
${arc([[349,178,0],[349,169,0],[350,160,10],[354,152,30],[361,146,60],[369,143,88],[377,145,120],[383,152,150],[385,160,170]],plate)}
<ellipse cx="366" cy="168" rx="12" ry="17" fill="#e9e2e3" stroke="#555" stroke-width=".7"/><ellipse cx="368" cy="169" rx="10" ry="15" fill="#bbb0b4" stroke="#444" stroke-width=".7"/>
<g stroke="#1d4a38" stroke-width=".7" stroke-linejoin="round">
 <path d="m383 166 9-5 12 9v7l-15 8-8-4z" fill="#23855d"/><path d="m383 166 9-5 12 9-15 8z" fill="#4ccc98"/><path d="m387 168 5-3 6 5-7 3z" fill="#217a55"/>
 <path d="m345 192 15-8 17 9v7l-18 8-14-8z" fill="#23855d"/><path d="m345 192 15-8 15 8-16 8z" fill="#4ccc98"/><path d="M359 200v8"/><path d="m350 192 8-4 8 4-7 4z" fill="#2d9d71"/><ellipse cx="358" cy="191" rx="3" ry="2" fill="#155239"/>
 <path d="M359 184q-3-22 8-29 9-6 17-1 6 4 5 15-1 15-10 20l-4 3q-8 0-16-8z" fill="url(#g1)"/>
 <ellipse cx="379" cy="172" rx="9.500" ry="14" fill="#55cda5"/><ellipse cx="379" cy="173" rx="7.500" ry="10.500" fill="#303333"/><ellipse cx="379" cy="173" rx="6" ry="8.500" fill="none" stroke="#bbb"/><ellipse cx="380" cy="174" rx="4.500" ry="6.500" fill="#b8b2b4"/><ellipse cx="382" cy="175" rx="3.500" ry="5" fill="#eee6e8"/>
</g>
${teeth}
<ellipse cx="333" cy="299" rx="15" ry="21" fill="#d3c5ca" stroke="#555" stroke-width=".8"/>
<ellipse cx="332" cy="302" rx="12" ry="17" fill="#aaa" stroke="#444" stroke-width=".8"/><ellipse cx="333" cy="302" rx="10" ry="15" fill="#fafafa" stroke="#777" stroke-width=".7"/><ellipse cx="335" cy="303" rx="8" ry="12" fill="#827c7e" stroke="#222"/><ellipse cx="335" cy="304" rx="5" ry="9" fill="none" stroke="#222" stroke-dasharray="2 1"/>
<g stroke="#555" stroke-width=".8" stroke-linejoin="round">
 <path d="m311 326 19-1v24l-19-12z" fill="#c5c9bd"/><path d="m315 331 13 7v7l-13-8z" fill="#fff"/>
 <path d="m330 302 14-8 1 46-14 9z" fill="#d8c9cf"/><path d="m330 302-2-1 14-8 2 1z" fill="#eee"/>
 <path d="M328 302v45l3 2V302z" fill="#b9bdb1"/>
 <ellipse cx="337" cy="309" rx="5" ry="7" fill="#999"/><ellipse cx="339" cy="309" rx="4.500" ry="6.500" fill="#dbcfd3"/>
</g>
${strand(309,236,320)}
<path d="M306 232q-1-10 4-9 3 1 3 6" fill="#ddd" stroke="#444" stroke-width="1.300"/><path d="M311 232q0-5 4-4 3 1 3 7v4h-6z" fill="#d2c3c8" stroke="#444" stroke-width=".8"/><circle cx="314.500" cy="231" r="1.500" fill="#eee" stroke="#444" stroke-width=".6"/>
${arc([[312,327,-30],[318,332,-60]],link)}${arc([[319,327,-30],[324,332,-60]],plate)}<circle cx="326" cy="334" r="2.300" fill="#222"/>
<g stroke="#555" stroke-width=".8" stroke-linejoin="round"><path d="m366 314 7-3 5 3v5l6 5v16l-18-10z" fill="#c5c9bd"/><path d="m378 319 5-2 6 4-5 3z" fill="#f0f0ec"/><path d="m384 324 5-3v16l-5 3z" fill="#d8c3ca"/><circle cx="370" cy="318" r="1.400" fill="#eee"/><circle cx="370" cy="328" r="1.400" fill="#eee"/><circle cx="380" cy="326" r="1.400" fill="#eee"/><circle cx="380" cy="334" r="1.400" fill="#eee"/></g>
<path d="M148 414v-9" stroke="#28a02c" stroke-width="1.500"/><path d="m148 414 7 4" stroke="#d22" stroke-width="1.500"/><path d="m148 414-7 4" stroke="#23c" stroke-width="1.500"/><path d="m146 406 2-4 2 4z" fill="#28a02c"/><path d="m154 415 3 4-5 0z" fill="#d22"/><path d="m142 415-3 4h5z" fill="#23c"/><circle cx="148" cy="414" r="1.300" fill="#333"/>
<circle cx="441" cy="348" r="5" fill="#57ad63"/><path d="m440 347 5 4.500-2 .3 1 2.200-1.300.4-1-2-1.700 1z" fill="#fff" stroke="#444" stroke-width=".5"/>`;
</script>
</body>
</html>
